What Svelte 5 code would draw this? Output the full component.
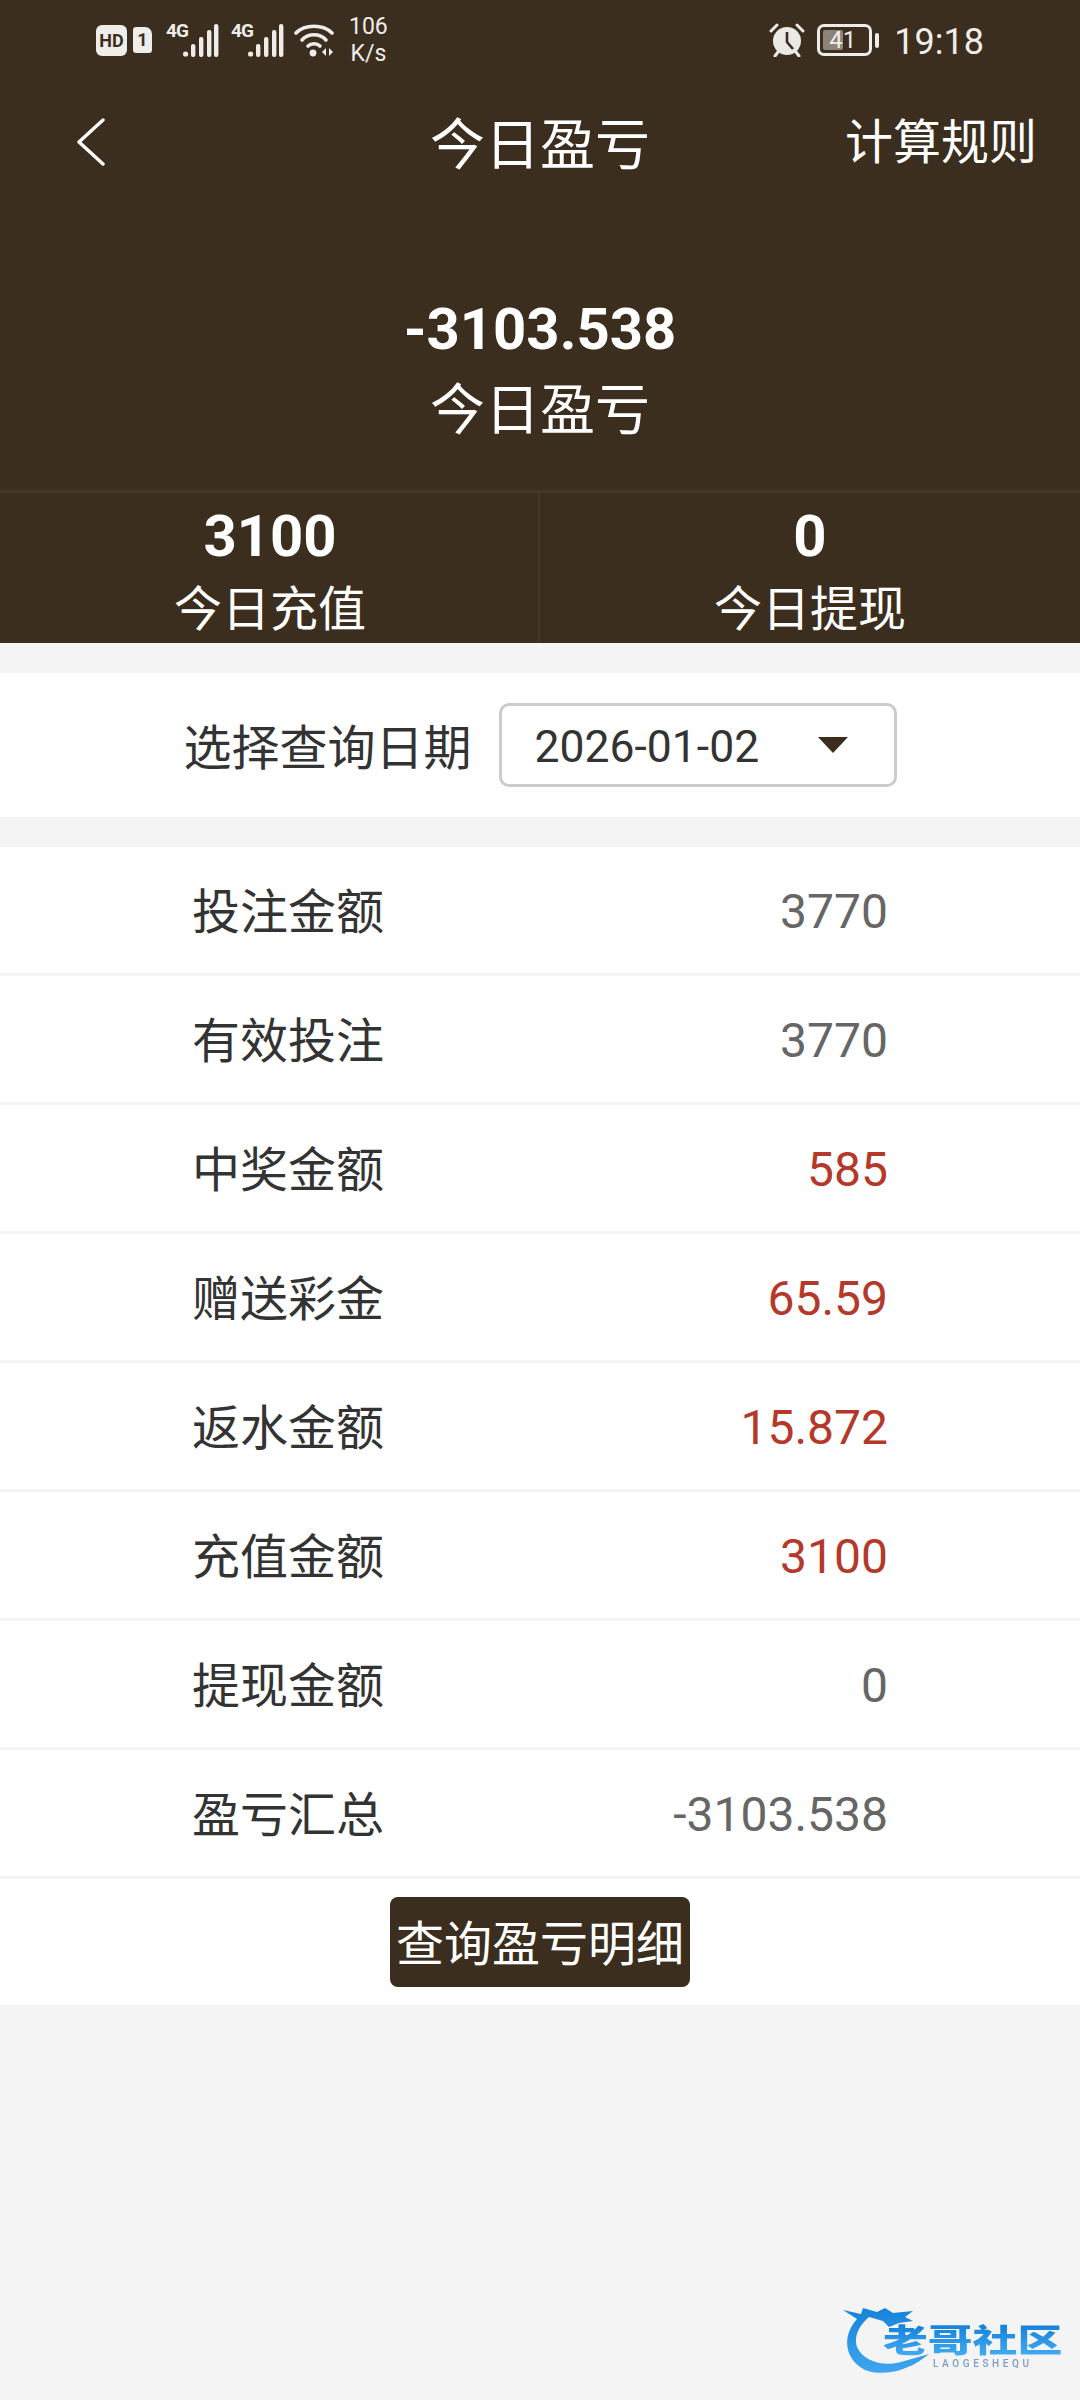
<script>
  const rows = [
    { label: "投注金额", value: "3770" },
    { label: "有效投注", value: "3770" },
    { label: "中奖金额", value: "585", red: true },
    { label: "赠送彩金", value: "65.59", red: true },
    { label: "返水金额", value: "15.872", red: true },
    { label: "充值金额", value: "3100", red: true },
    { label: "提现金额", value: "0" },
    { label: "盈亏汇总", value: "-3103.538" },
  ];
</script>

<div class="page">
  <header class="top">
    <div class="status">
      <div class="status-left">
        <span class="hd">HD</span>
        <span class="sim">1</span>
        {#each [0, 1] as i (i)}
          <span class="signal">
            <span class="net">4G</span>
            <svg width="36" height="33" viewBox="0 0 36 33" fill="#efedea">
              <circle cx="2.6" cy="30" r="2.6" />
              <rect x="8" y="20" width="4.4" height="13" rx="2" />
              <rect x="16" y="13" width="4.4" height="20" rx="2" />
              <rect x="24" y="6" width="4.4" height="27" rx="2" />
              <rect x="31" y="0" width="4.4" height="33" rx="2" />
            </svg>
          </span>
        {/each}
        <svg class="wifi" width="40" height="34" viewBox="0 0 40 34" fill="none" stroke="#efedea" stroke-width="3.6" stroke-linecap="round">
          <path d="M2 10 C11 1 29 1 38 10" />
          <path d="M8 17 C14 10 26 10 32 17" />
          <path d="M14 23 C17 20 23 20 26 23" />
          <circle cx="19" cy="30" r="3.4" fill="#efedea" stroke="none" />
          <path d="M32 25 l-4 4 l4 4 z M35 25 l4 4 l-4 4 z" fill="#efedea" stroke="none" />
        </svg>
        <span class="speed">106<br />K/s</span>
      </div>
      <div class="status-right">
        <svg class="alarm" width="36" height="34" viewBox="0 0 36 34">
          <circle cx="18" cy="18" r="14" fill="#ebe9e6" />
          <path d="M18 9 V19 L24 26" fill="none" stroke="#3b2e1e" stroke-width="2.6" />
          <path d="M2 8 L8 2 M34 8 L28 2 M6 33 L9 29 M30 33 L27 29" stroke="#ebe9e6" stroke-width="3" stroke-linecap="round" />
        </svg>
        <span class="battery"><span class="level"></span><span class="pct">41</span></span>
        <span class="nub"></span>
        <span class="time">19:18</span>
      </div>
    </div>

    <nav class="nav">
      <svg class="back" width="30" height="48" viewBox="0 0 30 48" fill="none" stroke="#fff" stroke-width="3.4" stroke-linecap="round" stroke-linejoin="round">
        <path d="M27 2 L3 24 L27 46" />
      </svg>
      <span class="title">今日盈亏</span>
      <span class="rules">计算规则</span>
    </nav>

    <div class="hero">
      <div class="hero-num">-3103.538</div>
      <div class="hero-label">今日盈亏</div>
    </div>

    <div class="stats">
      <div class="stat">
        <div class="stat-num">3100</div>
        <div class="stat-label">今日充值</div>
      </div>
      <div class="stat">
        <div class="stat-num">0</div>
        <div class="stat-label">今日提现</div>
      </div>
    </div>
  </header>

  <section class="date-row">
    <span class="date-label">选择查询日期</span>
    <div class="select">
      <span class="date-value">2026-01-02</span>
      <i class="caret"></i>
    </div>
  </section>

  <section class="list">
    {#each rows as row (row.label)}
      <div class="row">
        <span class="row-label">{row.label}</span>
        <span class="row-value" class:red={row.red}>{row.value}</span>
      </div>
    {/each}
    <div class="action">
      <button class="detail-btn">查询盈亏明细</button>
    </div>
  </section>

  <div class="watermark">
    <svg class="swoosh" width="120" height="70" viewBox="0 0 120 70">
      <defs>
        <linearGradient id="sw" x1="0" y1="0" x2="0" y2="1">
          <stop offset="0" stop-color="#1583d8" />
          <stop offset="1" stop-color="#3fa6f0" />
        </linearGradient>
      </defs>
      <path d="M0 5 L18 9 L20 3 L34 7 L42 3 L50 8 L70 6 L62 12 L70 16 L56 18 L46 22 L40 16 L26 12 C14 22 11 34 14 42 C20 56 40 62 58 57 L86 49 C66 66 40 72 22 65 C2 55 -2 32 14 14 Z" fill="url(#sw)" />
    </svg>
    <span class="wm-name">老哥社区</span>
    <span class="wm-sub">LAOGESHEQU</span>
  </div>
</div>

<style>
  :global(body) {
    margin: 0;
    background: #f4f4f4;
  }
  .page {
    position: relative;
    width: 1080px;
    height: 2400px;
    overflow: hidden;
    background: #f4f4f4;
    font-family: Roboto, "Noto Sans CJK SC", sans-serif;
  }
  .top {
    background: #3b2e1e;
    color: #fff;
  }
  .status {
    height: 80px;
    display: flex;
    justify-content: space-between;
    align-items: center;
    padding: 0 96px;
    color: #efedea;
  }
  .status-left,
  .status-right {
    display: flex;
    align-items: center;
  }
  .hd {
    width: 31px;
    height: 31px;
    border-radius: 6px;
    background: #efedea;
    color: #3b2e1e;
    font-size: 18px;
    font-weight: 700;
    line-height: 31px;
    text-align: center;
  }
  .sim {
    width: 19px;
    height: 26px;
    margin-left: 6px;
    background: #efedea;
    color: #3b2e1e;
    border-radius: 3px 7px 3px 3px;
    font-size: 18px;
    font-weight: 700;
    line-height: 26px;
    text-align: center;
  }
  .signal {
    position: relative;
    width: 53px;
    height: 33px;
    margin-left: 14px;
    display: flex;
    justify-content: flex-end;
  }
  .signal + .signal {
    margin-left: 12px;
  }
  .net {
    position: absolute;
    left: 0;
    top: -3px;
    font-size: 19px;
    font-weight: 700;
    line-height: 20px;
    letter-spacing: -1px;
  }
  .wifi {
    margin-left: 10px;
  }
  .speed {
    margin-left: 15px;
    font-size: 23px;
    line-height: 27px;
    text-align: center;
  }
  .alarm {
    margin-right: 12px;
  }
  .battery {
    position: relative;
    width: 55px;
    height: 32px;
    box-sizing: border-box;
    border: 3px solid #efedea;
    border-radius: 7px;
  }
  .level {
    position: absolute;
    left: 3px;
    top: 3px;
    bottom: 3px;
    width: 20px;
    background: #8c8478;
    border-radius: 2px;
  }
  .pct {
    position: absolute;
    inset: 0;
    padding-left: 9px;
    font-size: 24px;
    line-height: 26px;
    color: #efedea;
  }
  .nub {
    width: 4px;
    height: 15px;
    margin-left: 3px;
    background: #efedea;
    border-radius: 2px;
  }
  .time {
    margin: 3px 0 0 15px;
    font-size: 36px;
    line-height: 40px;
  }
  .nav {
    position: relative;
    height: 124px;
    display: flex;
    align-items: center;
    justify-content: center;
  }
  .back {
    position: absolute;
    left: 76px;
    top: 38px;
  }
  .title {
    margin-top: -4px;
    font-size: 55px;
  }
  .rules {
    position: absolute;
    right: 43px;
    top: 31px;
    font-size: 48px;
    line-height: 64px;
  }
  .hero {
    height: 286px;
    box-sizing: border-box;
    padding-top: 85px;
    text-align: center;
  }
  .hero-num {
    font-size: 58px;
    font-weight: 700;
    line-height: 80px;
  }
  .hero-label {
    font-size: 55px;
    line-height: 82px;
  }
  .stats {
    display: grid;
    grid-template-columns: 1fr 1fr;
    height: 153px;
    box-sizing: border-box;
    border-top: 3px solid #44382c;
  }
  .stat {
    padding-top: 8px;
    text-align: center;
  }
  .stat + .stat {
    margin-left: -2px;
    border-left: 2px solid #44382c;
  }
  .stat-num {
    font-size: 58px;
    font-weight: 700;
    line-height: 70px;
  }
  .stat-label {
    margin-top: 6px;
    font-size: 48px;
    line-height: 66px;
  }
  .date-row {
    margin-top: 30px;
    height: 144px;
    background: #fff;
    display: flex;
    align-items: center;
    justify-content: center;
    gap: 27px;
  }
  .date-label {
    padding-bottom: 2px;
    font-size: 48px;
    color: #333;
  }
  .select {
    width: 398px;
    height: 84px;
    box-sizing: border-box;
    border: 3px solid #ccc;
    border-radius: 10px;
    padding: 0 46px 0 33px;
    display: flex;
    align-items: center;
    justify-content: space-between;
    font-size: 44.5px;
    color: #333;
  }
  .date-value {
    padding-top: 3px;
  }
  .caret {
    width: 0;
    height: 0;
    border-left: 15px solid transparent;
    border-right: 15px solid transparent;
    border-top: 16px solid #3b2e1e;
  }
  .list {
    margin-top: 30px;
    background: #fff;
  }
  .row {
    height: 129px;
    box-sizing: border-box;
    border-bottom: 3px solid #f4f4f4;
    padding: 0 192px;
    display: flex;
    align-items: center;
    justify-content: space-between;
    font-size: 48px;
  }
  .row-label {
    padding-bottom: 5px;
    color: #333;
  }
  .row-value {
    padding-top: 3px;
    color: #666;
  }
  .row-value.red {
    color: #b5392b;
  }
  .action {
    height: 126px;
    display: flex;
    justify-content: center;
    align-items: center;
  }
  .detail-btn {
    width: 300px;
    height: 90px;
    padding: 0 0 5px;
    border: none;
    border-radius: 8px;
    background: #3b2e1e;
    color: #fff;
    font-family: inherit;
    font-size: 48px;
    white-space: nowrap;
  }
  .watermark {
    position: absolute;
    left: 843px;
    top: 2305px;
    width: 220px;
    height: 70px;
    filter: blur(0.7px);
  }
  .swoosh {
    position: absolute;
    left: 0;
    top: 0;
  }
  .wm-name {
    position: absolute;
    left: 40px;
    top: 19px;
    font-size: 32px;
    font-weight: 900;
    line-height: 34px;
    white-space: nowrap;
    transform: scaleX(1.4);
    transform-origin: left center;
    background: linear-gradient(#1480d8, #45aef5);
    -webkit-background-clip: text;
    background-clip: text;
    color: transparent;
  }
  .wm-sub {
    position: absolute;
    left: 90px;
    top: 53px;
    font-size: 10px;
    font-weight: 500;
    line-height: 12px;
    letter-spacing: 3.6px;
    color: #7d9cc0;
  }
</style>
